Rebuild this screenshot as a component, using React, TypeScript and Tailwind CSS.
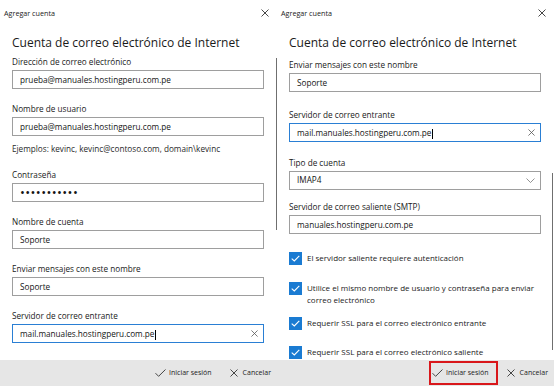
import React from "react";

const font = "font-['Open_Sans',sans-serif]";

function CloseIcon({ size = 8, color = "#333" }: { size?: number; color?: string }) {
  return (
    <svg width={size} height={size} viewBox="0 0 8 8">
      <path d="M0.5 0.5 L7.5 7.5 M7.5 0.5 L0.5 7.5" stroke={color} strokeWidth="0.9" fill="none" />
    </svg>
  );
}

function CheckIcon() {
  return (
    <svg width="11" height="8" viewBox="0 0 11 8">
      <path d="M0.5 4.2 L3.6 7.3 L10.5 0.5" stroke="#333" strokeWidth="0.9" fill="none" />
    </svg>
  );
}

function Field({
  label,
  value,
  focused,
  className = "",
}: {
  label: string;
  value: React.ReactNode;
  focused?: boolean;
  className?: string;
}) {
  return (
    <div className={`flex flex-col ${className}`}>
      <div className="h-[12px] text-[8.2px] leading-[12px] text-[#1a1a1a]">{label}</div>
      <div
        className={`mt-[2px] flex h-[19px] items-center border pl-[7px] pr-[5px] text-[8.2px] text-[#141414] ${
          focused ? "border-[#2a7fd4]" : "border-[#9e9e9e]"
        }`}
      >
        <span className="flex-1 whitespace-nowrap leading-[12px]">
          {value}
          {focused && <span className="ml-[0.5px] inline-block h-[10px] w-px translate-y-[1px] bg-black align-middle" />}
        </span>
        {focused && <CloseIcon size={7} color="#555" />}
      </div>
    </div>
  );
}

function Check({ children, className = "" }: { children: React.ReactNode; className?: string }) {
  return (
    <div className={`flex items-start gap-[5px] ${className}`}>
      <div className="flex h-[13px] w-[13px] shrink-0 items-center justify-center bg-[#1a7bd2]">
        <svg width="9" height="7" viewBox="0 0 9 7">
          <path d="M0.7 3.6 L3.3 6 L8.3 0.8" stroke="#fff" strokeWidth="1.1" fill="none" />
        </svg>
      </div>
      <div className="text-[8px] leading-[12px] text-[#1a1a1a]">{children}</div>
    </div>
  );
}

function Footer({ highlight }: { highlight?: boolean }) {
  return (
    <div className="flex h-[26px] items-center justify-end bg-[#e6e6e6] pr-[6px] text-[7px] text-[#222]">
      <div
        className={`flex h-[24px] items-center gap-[3px] border-2 pl-[1px] pr-[7px] ${
          highlight ? "border-[#d9171b]" : "border-transparent"
        }`}
      >
        <CheckIcon />
        <span>Iniciar sesión</span>
      </div>
      <div className="ml-[9px] flex items-center gap-[5px]">
        <CloseIcon size={8} />
        <span>Cancelar</span>
      </div>
    </div>
  );
}

function Panel({ children, footerHighlight }: { children: React.ReactNode; footerHighlight?: boolean }) {
  return (
    <div className="relative flex h-[386px] w-[277px] flex-col bg-white">
      <div className="flex h-[26px] items-center justify-between pl-[4px] pr-[8px] text-[7.2px] text-[#222]">
        <span>Agregar cuenta</span>
        <CloseIcon size={8} />
      </div>
      <div className="flex flex-1 flex-col pl-[12px] pr-[13px]">
        <h1 className="mt-[7px] text-[12px] leading-[20px] text-[#1a1a1a]">
          Cuenta de correo electrónico de Internet
        </h1>
        {children}
      </div>
      <Footer highlight={footerHighlight} />
    </div>
  );
}

export default function App() {
  return (
    <div className={`flex h-[386px] w-[554px] bg-white ${font}`}>
      <Panel>
        <Field className="mt-[3px]" label="Dirección de correo electrónico" value="prueba@manuales.hostingperu.com.pe" />
        <Field className="mt-[14px]" label="Nombre de usuario" value="prueba@manuales.hostingperu.com.pe" />
        <div className="mt-[7px] text-[8.2px] leading-[12px] text-[#2a2a2a]">
          Ejemplos: kevinc, kevinc@contoso.com, domain\kevinc
        </div>
        <Field
          className="mt-[14px]"
          label="Contraseña"
          value={<span className="inline-block text-[13px] leading-[12px] tracking-[0.4px]">•••••••••••</span>}
        />
        <Field className="mt-[14px]" label="Nombre de cuenta" value="Soporte" />
        <Field className="mt-[14px]" label="Enviar mensajes con este nombre" value="Soporte" />
        <Field className="mt-[14px]" label="Servidor de correo entrante" value="mail.manuales.hostingperu.com.pe" focused />
        <div className="absolute right-[0px] top-[58px] h-[172px] w-px bg-[#6f6f6f]" />
      </Panel>
      <Panel footerHighlight>
        <Field className="mt-[6px]" label="Enviar mensajes con este nombre" value="Soporte" />
        <Field className="mt-[17px]" label="Servidor de correo entrante" value="mail.manuales.hostingperu.com.pe" focused />
        <div className="mt-[15px] flex flex-col">
          <div className="h-[12px] text-[8.2px] leading-[12px] text-[#1a1a1a]">Tipo de cuenta</div>
          <div className="mt-[2px] flex h-[19px] items-center justify-between border border-[#9e9e9e] pl-[7px] pr-[5px] text-[8.2px] text-[#141414]">
            <span>IMAP4</span>
            <svg width="9" height="5" viewBox="0 0 9 5">
              <path d="M0.5 0.5 L4.5 4.5 L8.5 0.5" stroke="#777" strokeWidth="0.8" fill="none" />
            </svg>
          </div>
        </div>
        <Field className="mt-[11px]" label="Servidor de correo saliente (SMTP)" value="manuales.hostingperu.com.pe" />
        <Check className="mt-[18px]">El servidor saliente requiere autenticación</Check>
        <Check className="mt-[17px]">
          Utilice el mismo nombre de usuario y contraseña para enviar
          <br />
          correo electrónico
        </Check>
        <Check className="mt-[11px]">Requerir SSL para el correo electrónico entrante</Check>
        <Check className="mt-[16px]">Requerir SSL para el correo electrónico saliente</Check>
        <div className="absolute right-[1px] top-[173px] h-[177px] w-px bg-[#6f6f6f]" />
      </Panel>
    </div>
  );
}
